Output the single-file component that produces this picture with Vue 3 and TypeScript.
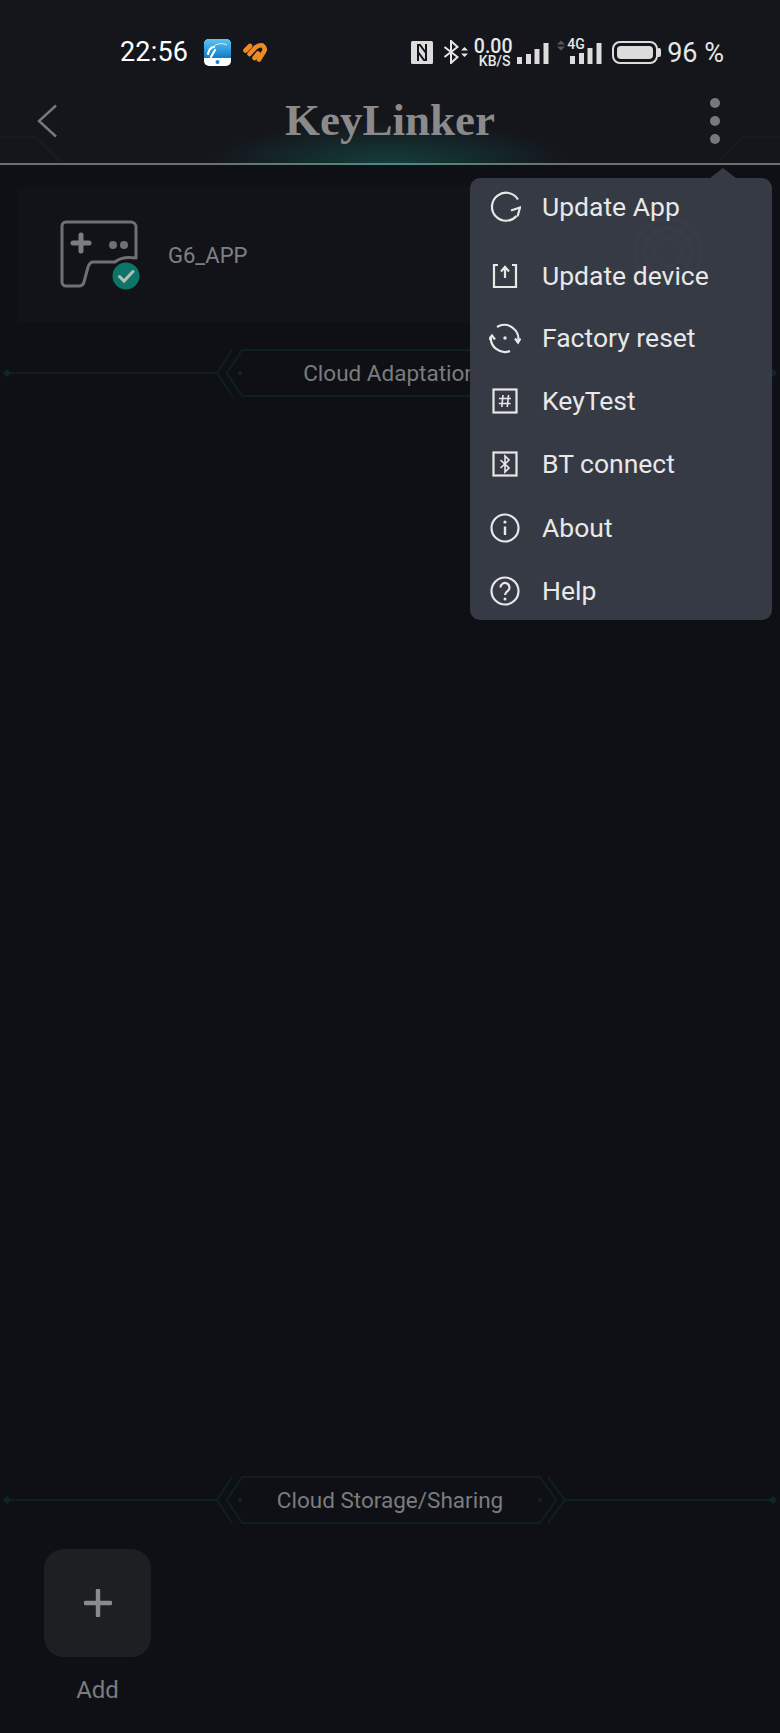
<script setup lang="ts">
const menuItems = [
    { id: "app", label: "Update App" },
    { id: "device", label: "Update device" },
    { id: "reset", label: "Factory reset" },
    { id: "test", label: "KeyTest" },
    { id: "bt", label: "BT connect" },
    { id: "about", label: "About" },
    { id: "help", label: "Help" },
];

const signalBars = [
    { x: 0, h: 7 },
    { x: 9, h: 10 },
    { x: 17.5, h: 15 },
    { x: 26.5, h: 21 },
];
</script>

<template>
    <div class="page">
        <header class="top">
            <div class="status">
                <span class="time">22:56</span>
                <svg class="app-blue" width="27" height="27" viewBox="0 0 27 27">
                    <defs>
                        <linearGradient id="blueTile" x1="0" y1="0" x2="0" y2="1">
                            <stop offset="0" stop-color="#5fc4f2" />
                            <stop offset="1" stop-color="#0f7ccb" />
                        </linearGradient>
                    </defs>
                    <rect width="27" height="27" rx="5" fill="#fff" />
                    <path d="M0 5a5 5 0 0 1 5-5h17a5 5 0 0 1 5 5v14H0z" fill="url(#blueTile)" />
                    <circle cx="13.5" cy="23" r="2" fill="#1580cf" />
                    <path d="M4 15c1-5 3-7 6-7M7 18l4-7" stroke="#fff" stroke-width="2.2" fill="none" stroke-linecap="round" />
                    <path d="M10 7c4-3 9-3 13-1" stroke="#d6f0fc" stroke-width="1" fill="none" />
                </svg>
                <svg class="app-heart" width="25" height="21" viewBox="0 0 25 21">
                    <g stroke="#f08a24" stroke-width="4.6" fill="none" stroke-linecap="round" stroke-linejoin="round">
                        <path d="M2.5 8.5L7 4" />
                        <path d="M6.5 12L12.5 5.5Q16 2.5 19.5 3.5Q23 6 21 9.5L16 17.5" />
                        <path d="M11.5 16L15 11.5" />
                    </g>
                </svg>

                <div class="status-right">
                    <svg width="22" height="23" viewBox="0 0 22 23">
                        <rect width="22" height="23" rx="1.5" fill="#dcdcdc" />
                        <path d="M7 20V4h2l6 8M15 3v16h-2L7 11" stroke="#14161c" stroke-width="2" fill="none" />
                    </svg>
                    <svg class="gap-bt" width="26" height="24" viewBox="0 0 26 24">
                        <path d="M1.5 7L14.5 17L8 23V1L14.5 7L1.5 17" stroke="#e6e6e6" stroke-width="2" fill="none" />
                        <path d="M18 10.5L21.5 7L25 10.5zM18 13.5L21.5 17L25 13.5z" fill="#e6e6e6" />
                    </svg>
                    <div class="speed">
                        <span class="speed-num">0.00</span>
                        <span class="speed-unit">KB/S</span>
                    </div>
                    <svg class="gap-signal" width="32" height="22" viewBox="0 0 32 22">
                        <rect v-for="bar in signalBars" :key="bar.x" :x="bar.x" :y="22 - bar.h" width="5" :height="bar.h" fill="#dcdcdc" />
                    </svg>
                    <div class="mobile">
                        <svg width="8" height="11" viewBox="0 0 8 11">
                            <path d="M0 4.5L4 0.5L8 4.5zM0 6.5L4 10.5L8 6.5z" fill="#55585c" />
                        </svg>
                        <span class="mobile-4g">4G</span>
                        <svg class="mobile-bars" width="32" height="22" viewBox="0 0 32 22">
                            <rect x="0" y="14" width="5" height="8" fill="#dcdcdc" />
                            <rect x="9" y="11" width="5" height="11" fill="#dcdcdc" />
                            <rect x="17.5" y="6" width="5" height="16" fill="#dcdcdc" />
                            <rect x="26.5" y="1" width="5" height="21" fill="#dcdcdc" />
                        </svg>
                    </div>
                    <div class="battery">
                        <div class="battery-fill"></div>
                    </div>
                    <span class="percent">96 %</span>
                </div>
            </div>

            <nav class="nav">
                <svg class="back" width="22" height="34" viewBox="0 0 22 34">
                    <path d="M20 1.5L3 17L20 32.5" stroke="#77797c" stroke-width="2.4" fill="none" />
                </svg>
                <h1 class="title">KeyLinker</h1>
                <div class="dots"><i></i><i></i><i></i></div>
                <svg class="corner corner--left" width="62" height="28" viewBox="0 0 62 28">
                    <path d="M0 2H36L60 27" stroke="#1b1e24" stroke-width="1.5" fill="none" />
                </svg>
                <svg class="corner corner--right" width="62" height="28" viewBox="0 0 62 28">
                    <path d="M62 2H24L2 26" stroke="#1b1e24" stroke-width="1.5" fill="none" />
                </svg>
            </nav>
            <div class="rule"></div>
        </header>

        <section class="card">
            <svg class="pad" width="84" height="72" viewBox="0 0 84 72">
                <path d="M6 2H71a5 5 0 0 1 5 5V38Q62 36 55 42H33Q30 42 28 47L24 62Q23 66 19 66H6a4 4 0 0 1-4-4V6a4 4 0 0 1 4-4z" stroke="#6f7073" stroke-width="3" fill="none" stroke-linejoin="round" />
                <path d="M21 15V31M13 23H29" stroke="#7c7d80" stroke-width="5" stroke-linecap="round" />
                <circle cx="53" cy="25" r="4" fill="#6f7073" />
                <circle cx="64" cy="25" r="4" fill="#6f7073" />
                <circle cx="66" cy="56" r="13.5" fill="#0d7468" />
                <path d="M59.5 56.5L64 61L73 51.5" stroke="#b9bdbc" stroke-width="3" fill="none" stroke-linecap="round" />
            </svg>
            <span class="card-name">G6_APP</span>
        </section>

        <div class="banner">
            <svg class="banner-art" width="780" height="50" viewBox="0 0 780 50">
                <g stroke="#0f2025" stroke-width="2" fill="none">
                    <path d="M7 25H217M565 25H773" />
                    <path d="M232 2L217 25L232 48M548 2L565 25L548 48" />
                    <path d="M242 2H540L556 25L540 48H242L227 25z" />
                </g>
                <g fill="#11242a">
                    <path d="M3 25L7 21L11 25L7 29z" />
                    <path d="M769 25L773 21L777 25L773 29z" />
                    <circle cx="240" cy="25" r="2" />
                    <circle cx="540" cy="25" r="2" />
                </g>
            </svg>
            <span class="banner-text">Cloud Adaptation</span>
        </div>

        <div class="spacer"></div>

        <div class="banner">
            <svg class="banner-art" width="780" height="50" viewBox="0 0 780 50">
                <g stroke="#0f2025" stroke-width="2" fill="none">
                    <path d="M7 25H217M565 25H773" />
                    <path d="M232 2L217 25L232 48M548 2L565 25L548 48" />
                    <path d="M242 2H540L556 25L540 48H242L227 25z" />
                </g>
                <g fill="#11242a">
                    <path d="M3 25L7 21L11 25L7 29z" />
                    <path d="M769 25L773 21L777 25L773 29z" />
                    <circle cx="240" cy="25" r="2" />
                    <circle cx="540" cy="25" r="2" />
                </g>
            </svg>
            <span class="banner-text">Cloud Storage/Sharing</span>
        </div>

        <div class="add">
            <div class="add-tile">
                <svg width="28" height="28" viewBox="0 0 28 28">
                    <path d="M14 1.5V26.5M1.5 14H26.5" stroke="#8a8b8d" stroke-width="4.4" stroke-linecap="round" />
                </svg>
            </div>
            <span class="add-label">Add</span>
        </div>

        <div class="menu" role="menu">
            <span class="menu-arrow"></span>
            <svg class="menu-rings" width="90" height="90" viewBox="0 0 90 90">
                <g stroke="#393d47" stroke-width="2.5" fill="none">
                    <circle cx="45" cy="45" r="14" />
                    <circle cx="45" cy="45" r="24" />
                    <circle cx="45" cy="45" r="33" />
                </g>
            </svg>
            <div v-for="item in menuItems" :key="item.id" class="menu-item" role="menuitem">
                <svg class="menu-icon" width="32" height="32" viewBox="0 0 32 32">
                    <g stroke="#e8e8e8" stroke-width="2.2" fill="none">
                        <template v-if="item.id === 'app'">
                            <path d="M29 8.5A14 14 0 1 0 27.5 25" />
                            <path d="M22 19.5L31 16.5L28.5 25.5" />
                        </template>
                        <template v-else-if="item.id === 'device'">
                            <path d="M9 5H5V27H27V5H23" />
                            <path d="M16 18V8M12 11.5L16 7L20 11.5" />
                        </template>
                        <template v-else-if="item.id === 'reset'">
                            <path d="M8 5A14 14 0 0 1 29 20" />
                            <path d="M26 16.5L29 20.5L31.5 16.5" />
                            <path d="M2 14A14 14 0 0 0 21 29" />
                            <path d="M0 17.5L3 13.5L6 17.5" />
                            <circle cx="16" cy="16" r="1.7" fill="#e8e8e8" stroke="none" />
                        </template>
                        <template v-else-if="item.id === 'test'">
                            <rect x="4.5" y="4.5" width="23" height="23" />
                            <path d="M14 10L12.8 22M19.5 10L18.3 22M10 13.5H22M9.8 18.5H21.6" stroke-width="1.6" />
                        </template>
                        <template v-else-if="item.id === 'bt'">
                            <rect x="4.5" y="4.5" width="23" height="23" />
                            <path d="M11.5 12L20 20L16 24V8L20 12L11.5 20" stroke-width="1.6" />
                        </template>
                        <template v-else-if="item.id === 'about'">
                            <circle cx="16" cy="16" r="13.5" />
                            <path d="M16 14.5V23" stroke-width="2.4" />
                            <circle cx="16" cy="10" r="1.6" fill="#e8e8e8" stroke="none" />
                        </template>
                        <template v-else>
                            <circle cx="16" cy="16" r="13.5" />
                            <path d="M11.5 12.5a4.5 4.5 0 1 1 7 3.7c-1.6 1.1-2.5 2-2.5 3.8" />
                            <circle cx="16" cy="24" r="1.5" fill="#e8e8e8" stroke="none" />
                        </template>
                    </g>
                </svg>
                <span class="menu-label">{{ item.label }}</span>
            </div>
        </div>
    </div>
</template>

<style scoped>
.page {
    position: relative;
    display: flex;
    flex-direction: column;
    width: 780px;
    height: 1733px;
    overflow: hidden;
    background: #0e1015;
    font-family: Roboto, "Liberation Sans", sans-serif;
}

.top {
    background: #14161c;
}

.status {
    display: flex;
    align-items: center;
    height: 40px;
    padding: 32px 56px 0 120px;
    color: #fff;
}

.time {
    width: 84px;
    font-size: 27px;
    letter-spacing: 0.2px;
}

.app-heart {
    margin-left: 12px;
}

.status-right {
    display: flex;
    align-items: center;
    margin-left: auto;
    color: #e6e6e6;
}

.gap-bt {
    margin-left: 10px;
}

.speed {
    display: flex;
    flex-direction: column;
    align-items: center;
    width: 38px;
    margin-left: 5px;
    margin-top: 3px;
}

.speed-num {
    font-size: 19.5px;
    font-weight: 500;
    line-height: 15px;
}

.speed-unit {
    margin-left: 3px;
    font-size: 14px;
    font-weight: 500;
    line-height: 14px;
}

.gap-signal {
    margin-left: 5px;
    margin-top: 2px;
}

.mobile {
    position: relative;
    display: flex;
    align-items: flex-start;
    height: 24px;
    margin-left: 8px;
}

.mobile-4g {
    position: absolute;
    top: -2px;
    left: 10px;
    font-size: 14px;
    font-weight: 500;
    line-height: 13px;
}

.mobile-bars {
    margin-left: 5px;
    margin-top: 2px;
}

.battery {
    position: relative;
    width: 46px;
    height: 23px;
    margin-left: 10px;
    padding: 3px;
    box-sizing: border-box;
    border: 2px solid #dcdcdc;
    border-radius: 8px;
}

.battery::after {
    content: "";
    position: absolute;
    top: 5px;
    right: -5px;
    width: 3px;
    height: 9px;
    border-radius: 0 2px 2px 0;
    background: #dcdcdc;
}

.battery-fill {
    width: 100%;
    height: 100%;
    border-radius: 4px;
    background: #dcdcdc;
}

.percent {
    margin-left: 9px;
    margin-top: 2px;
    font-size: 27px;
    line-height: 30px;
    white-space: pre;
}

.nav {
    position: relative;
    display: flex;
    align-items: center;
    justify-content: center;
    height: 87px;
    padding-top: 4px;
    box-sizing: content-box;
    overflow: hidden;
}

.nav::before {
    content: "";
    position: absolute;
    left: 210px;
    bottom: 0;
    width: 360px;
    height: 42px;
    background: radial-gradient(ellipse 50% 100% at 50% 100%, rgba(22, 84, 78, 0.62), rgba(22, 84, 78, 0));
}

.back {
    position: absolute;
    left: 36px;
    top: 32px;
}

.title {
    position: relative;
    margin: 0;
    color: #8a8a8a;
    font-family: "Liberation Serif", serif;
    font-size: 45px;
    font-weight: 700;
    line-height: 50px;
}

.dots {
    position: absolute;
    top: 26px;
    left: 710px;
    display: flex;
    flex-direction: column;
    gap: 8px;
}

.dots i {
    width: 10px;
    height: 10px;
    border-radius: 50%;
    background: #77787a;
}

.corner {
    position: absolute;
    bottom: 0;
}

.corner--left {
    left: 0;
}

.corner--right {
    right: 0;
}

.rule {
    height: 2px;
    background: linear-gradient(90deg, #6c6e70 0%, #6c7070 25%, #4d8a80 50%, #6c7070 75%, #6c6e70 100%);
}

.card {
    display: flex;
    align-items: center;
    height: 135px;
    margin: 22px 17px 0;
    background: #111318;
}

.pad {
    margin-left: 43px;
    margin-top: 2px;
}

.card-name {
    margin-left: 24px;
    margin-top: 2px;
    color: #7f8082;
    font-size: 22px;
}

.banner {
    position: relative;
    display: flex;
    align-items: center;
    justify-content: center;
    flex: none;
    height: 50px;
    margin-top: 26px;
}

.banner-art {
    position: absolute;
    top: 0;
    left: 0;
}

.banner-text {
    position: relative;
    color: #7b7c7e;
    font-size: 22.5px;
}

.spacer {
    flex: 1;
}

.add {
    display: flex;
    flex-direction: column;
    align-items: center;
    width: 107px;
    margin: 24px 0 29px 44px;
}

.add-tile {
    display: flex;
    align-items: center;
    justify-content: center;
    width: 107px;
    height: 108px;
    border-radius: 20px;
    background: #1e1f23;
}

.add-label {
    margin-top: 20px;
    color: #7b7c7e;
    font-size: 24px;
    line-height: 27px;
}

.menu {
    position: absolute;
    top: 178px;
    left: 470px;
    width: 302px;
    height: 442px;
    border-radius: 10px;
    background: #363a44;
}

.menu-arrow {
    position: absolute;
    top: -10px;
    left: 240px;
    width: 0;
    height: 0;
    border-right: 13px solid transparent;
    border-bottom: 10px solid #363a44;
    border-left: 13px solid transparent;
}

.menu-rings {
    position: absolute;
    top: 29px;
    left: 153px;
}

.menu-item {
    position: relative;
    display: flex;
    align-items: center;
    gap: 21px;
    height: 63px;
    padding-left: 19px;
}

.menu-item:first-of-type {
    height: 57px;
    margin-bottom: 9px;
}

.menu-item:nth-of-type(3) {
    margin-top: -1px;
}

.menu-item:nth-of-type(6) {
    margin-top: 1px;
}

.menu-label {
    color: #e8e8e8;
    font-size: 26.5px;
}
</style>

<style>
body {
    background: #0e1015;
}
</style>
